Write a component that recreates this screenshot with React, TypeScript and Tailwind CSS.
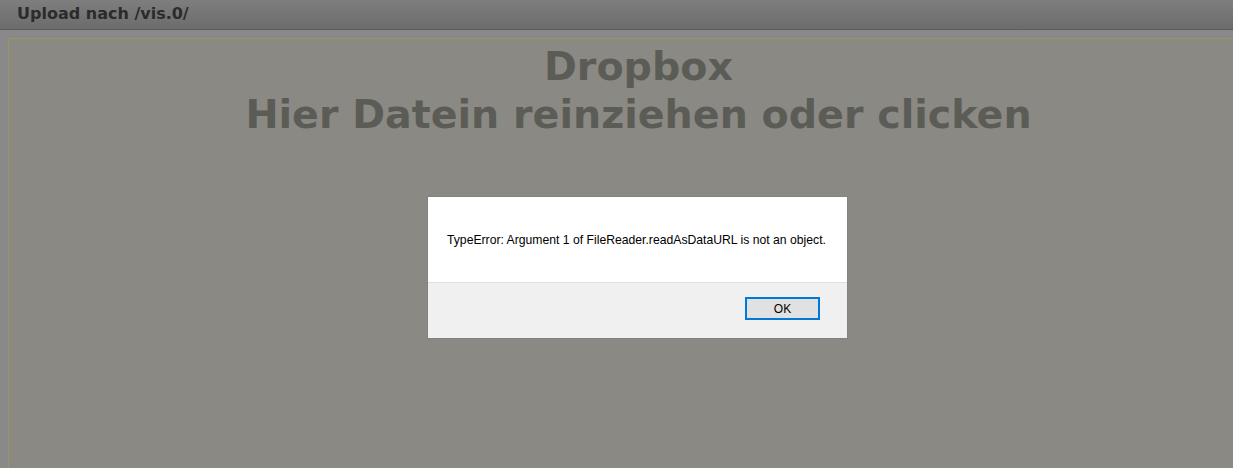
export default function App() {
  return (
    <div className="relative w-[1233px] h-[468px] overflow-hidden bg-[#898989]" style={{ fontFamily: '"DejaVu Sans", Verdana, sans-serif' }}>
      <div className="h-[30px] border-b border-[#5e5e5e] bg-gradient-to-b from-[#7e7e7e] to-[#6c6c6c] pl-[17px] text-[16px] font-bold leading-[28px] text-[#2b2b2b]">
        Upload nach /vis.0/
      </div>
      <div className="ml-[8px] mt-[8px] h-[500px] w-[1261px] border border-[#9c945f] bg-[#8a8984] pt-[3px] text-center text-[39.6px] font-bold leading-[48px] text-[#5c5c57]">
        <div>Dropbox</div>
        <div>Hier Datein reinziehen oder clicken</div>
      </div>
      <div className="absolute left-[427px] top-[196px] flex h-[143px] w-[421px] flex-col border border-[#828282] bg-white" style={{ fontFamily: '"Liberation Sans", Arial, sans-serif' }}>
        <div className="flex h-[85px] items-center pl-[19px] pt-[2px] text-[12.2px] text-black">
          TypeError: Argument 1 of FileReader.readAsDataURL is not an object.
        </div>
        <div className="flex flex-1 items-start justify-end border-t border-[#dfdfdf] bg-[#f0f0f0] pr-[27px] pt-[14px]">
          <div className="flex h-[23px] w-[75px] items-center justify-center border-2 border-[#0078d7] bg-[#e1e1e1] text-[12px] text-black">
            OK
          </div>
        </div>
      </div>
    </div>
  );
}
